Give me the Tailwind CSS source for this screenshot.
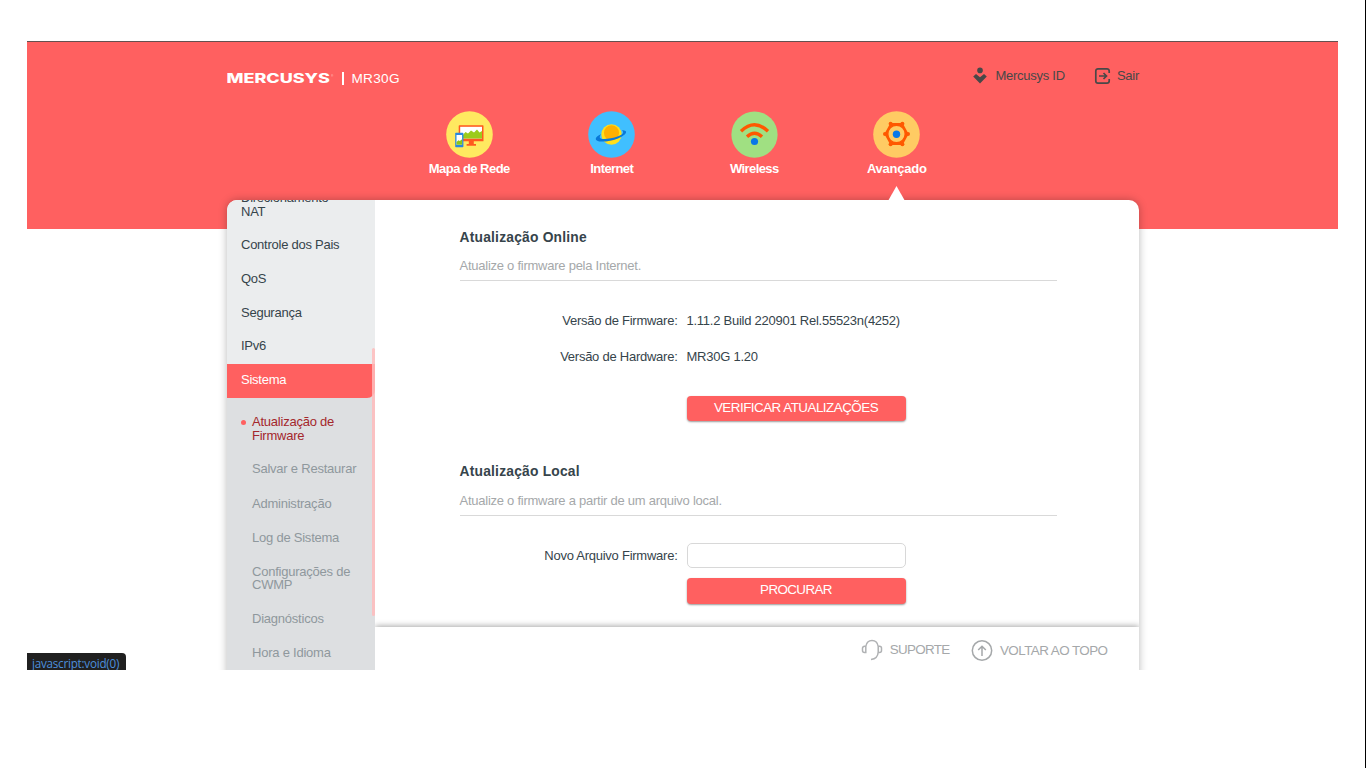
<!DOCTYPE html>
<html lang="pt-BR">
<head>
<meta charset="utf-8">
<title>MR30G</title>
<script src="https://cdn.jsdelivr.net/npm/@tailwindcss/browser@4"></script>
</head>
<body class="h-[768px] w-[1366px] overflow-hidden border-r border-black bg-white pt-[41px] pl-[27px] font-['Liberation_Sans',Arial,sans-serif] text-[13px] leading-[13.7px] tracking-[-0.25px] text-[#36444b]">
<div class="relative h-[629px] w-[1311px] overflow-hidden">
  <header class="h-[188px] border-t border-[#65504f] bg-[#ff6060] px-[200px]">
    <div class="flex h-[69px] w-[912px] items-start justify-between">
      <div class="flex items-center pt-[28px] text-white">
        <svg class="h-[16px] w-[108px] tracking-normal" viewBox="0 0 108 16"><text x="-0.5" y="13" font-family="Inter" font-weight="800" font-size="12.8" textLength="103.5" lengthAdjust="spacingAndGlyphs" fill="#fff">MERCUSYS</text><text x="104" y="7" font-size="3" fill="#fff" opacity=".7">®</text></svg>
        <span class="ml-[7px] h-[13px] w-[1.5px] bg-white"></span>
        <span class="ml-[8px] pt-[2px] text-[13.6px] tracking-[0.300px]">MR30G</span>
      </div>
      <div class="flex items-center pt-[25px] text-[#484848]">
        <svg class="h-[18px] w-[16px]" viewBox="0 0 16 18" fill="#484848"><circle cx="8" cy="3.4" r="2.8"/><path d="M1.2 9.6 4 7 8 10.3 12 7l2.800 2.600L8 16.400z"/></svg>
        <span class="-mt-px ml-[7px]">Mercusys ID</span>
        <svg class="ml-[29px] h-[18px] w-[17px]" viewBox="0 0 17 18" fill="none" stroke="#484848" stroke-width="1.700"><path d="M15.200 6V4a2.200 2.200 0 0 0-2.200-2.200H4A2.200 2.200 0 0 0 1.800 4v10A2.200 2.200 0 0 0 4 16.200h9a2.200 2.200 0 0 0 2.200-2.200v-2M5 9h7.600M9.500 6 12.500 9l-3 3"/></svg>
        <span class="-mt-px ml-[6px]">Sair</span>
      </div>
    </div>
    <nav class="ml-[171px] flex w-[570px] text-center font-bold text-white">
      <a class="flex w-[142.5px] flex-col items-center"><svg class="h-[47px] w-[47px]" viewBox="0 0 47 47"><circle cx="23.500" cy="23.500" r="23.300" fill="#ffe960"/><path d="M22.800 29.500h5v3.500h2.200v1.700H20.600V33h2.200z" fill="#ff5a1f"/><rect x="12.700" y="14.300" width="24.800" height="16" rx=".6" fill="#ff5a1f"/><path d="M14.200 15.800h21.800v11.700H14.200z" fill="#fff"/><path d="M16 25l3.500-4 2.500 1.500 3-3 3 2 3-3 2.500 3 2.500-1.500v7.500H16z" fill="#9ccb1b"/><rect x="9.200" y="21.800" width="8.200" height="14.500" rx=".8" fill="#2988df"/><path d="M10.500 24h5.600v9.800h-5.600z" fill="#fff"/><path d="M10.500 31l2-1.800 1.300.8 2.300-1.800v5.600h-5.600z" fill="#8bc41a"/></svg><span class="mt-[4px] tracking-[-0.530px]">Mapa de Rede</span></a>
      <a class="flex w-[142.5px] flex-col items-center"><svg class="h-[47px] w-[47px]" viewBox="0 0 47 47"><circle cx="23.500" cy="23.500" r="23.300" fill="#40bfff"/><circle cx="23.500" cy="23.500" r="10.200" fill="#ffdf1c"/><circle cx="23.500" cy="21.800" r="7.600" fill="#ffb000"/><path d="M13.500 23C5.500 26 6 30.700 14 30.600c5-.1 11-1.200 16-3.200 8-3.300 11.500-8.100 3.800-8.200 2.700 1.800 1.500 4.200-3.600 6.100-4.700 1.800-10.200 2.800-14.200 2.800-4.600 0-5.500-2.100-2.500-5.100z" fill="#0878d8"/></svg><span class="mt-[4px] tracking-[-0.580px]">Internet</span></a>
      <a class="flex w-[142.5px] flex-col items-center"><svg class="h-[47px] w-[47px]" viewBox="0 0 47 47"><circle cx="23.500" cy="23.700" r="23.100" fill="#a0e082"/><path d="M10 20.200Q23.500 7.200 37 20.200M16 25.700Q23.500 18.700 31 25.700" fill="none" stroke="#ff5900" stroke-width="3.300"/><circle cx="23.500" cy="30.500" r="3.600" fill="#0878e8"/></svg><span class="mt-[4px] tracking-[-0.600px]">Wireless</span></a>
      <a class="flex w-[142.5px] flex-col items-center"><svg class="h-[47px] w-[47px]" viewBox="0 0 47 47"><circle cx="23.500" cy="23.500" r="23.300" fill="#ffcb63"/><path d="M34 23 28.800 32.500h-10.600L13 23l5.200-9.500h10.600z" fill="none" stroke="#ff5900" stroke-width="2.800" stroke-linejoin="round"/><g fill="#ff5900"><circle cx="35" cy="23" r="2"/><circle cx="12" cy="23" r="2"/><circle cx="29.400" cy="12.800" r="2"/><circle cx="17.600" cy="12.800" r="2"/><circle cx="29.400" cy="33.200" r="2"/><circle cx="17.600" cy="33.200" r="2"/></g><circle cx="23.500" cy="23" r="8.800" fill="#ffcb63" stroke="#ff5900" stroke-width="1.600"/><circle cx="23.500" cy="23.300" r="3.700" fill="#0878e8"/></svg><span class="mt-[4px] tracking-[-0.250px]">Avançado</span></a>
    </nav>
  </header>

  <svg class="absolute top-[145px] left-[861px] z-10 h-[15px] w-[17px]" viewBox="0 0 17 15"><path d="M8.500 0 17 15H0z" fill="#fff"/></svg>

  <div class="absolute top-[159px] left-[200px] h-[530px] w-[912px] rounded-[10px] bg-white shadow-[0_0_8px_rgba(0,0,0,0.28)]">
    <div class="relative flex h-full overflow-hidden rounded-[10px]">
      <aside class="w-[148px] shrink-0 bg-[#ebedee]">
        <ul class="-mt-[18.200px]">
          <li class="px-[14px] pt-[9.200px] pb-[10.800px]">Direcionamento<br>NAT</li>
          <li class="px-[14px] pt-[9.200px] pb-[10.800px]">Controle dos Pais</li>
          <li class="px-[14px] pt-[9.200px] pb-[10.800px]">QoS</li>
          <li class="px-[14px] pt-[9.200px] pb-[10.800px]">Segurança</li>
          <li class="px-[14px] pt-[9.200px] pb-[10.800px]">IPv6</li>
          <li class="bg-[#dddfe1]"><div class="rounded-br-[8px] bg-[#ff6060] px-[14px] pt-[9.200px] pb-[10.800px] text-white">Sistema</div></li>
        </ul>
        <ul class="h-[300px] bg-[#dddfe1] pt-[7.500px] pl-[25px] tracking-[-0.230px] text-[#8f989d]">
          <li class="relative pt-[9.700px] pb-[10.700px] text-[#a4272c]"><span class="absolute top-[14.500px] -left-[11px] h-[5px] w-[5px] rounded-full bg-[#ff6060]"></span>Atualização de<br>Firmware</li>
          <li class="pt-[9.400px] pb-[11px]">Salvar e Restaurar</li>
          <li class="pt-[9.700px] pb-[10.700px]">Administração</li>
          <li class="pt-[9.700px] pb-[10.700px]">Log de Sistema</li>
          <li class="pt-[9.400px] pb-[11px]">Configurações de<br>CWMP</li>
          <li class="pt-[9.400px] pb-[11px]">Diagnósticos</li>
          <li class="pt-[9.400px] pb-[11px]">Hora e Idioma</li>
        </ul>
      </aside>
      <div class="absolute top-[148px] left-[145px] h-[268px] w-[3px] rounded-full bg-[#ffbcbc]/85"></div>

      <main class="flex flex-1 flex-col overflow-hidden">
        <div class="h-[427px] shrink-0 pt-[31px] pl-[84.500px]">
          <section class="w-[597px]">
            <h2 class="text-[13.800px] font-bold tracking-[0.220px]">Atualização Online</h2>
            <p class="mt-[14px] border-b border-[#d9d9d9] pb-[8px] text-[#a5a8aa]">Atualize o firmware pela Internet.</p>
            <div class="mt-[33px] grid grid-cols-[218px_219px] gap-x-[9px] gap-y-[21.500px]">
              <span class="text-right">Versão de Firmware:</span><span>1.11.2 Build 220901 Rel.55523n(4252)</span>
              <span class="text-right">Versão de Hardware:</span><span>MR30G 1.20</span>
            </div>
            <button class="mt-[32.500px] ml-[227px] block h-[25px] w-[219px] rounded-[4px] bg-[#ff6060] pb-[1px] text-[13.400px] tracking-[-0.510px] text-white shadow-[0_1px_2px_rgba(0,0,0,0.4)]">VERIFICAR ATUALIZAÇÕES</button>
          </section>
          <section class="mt-[44px] w-[597px]">
            <h2 class="text-[13.800px] font-bold tracking-[0.220px]">Atualização Local</h2>
            <p class="mt-[15px] border-b border-[#d9d9d9] pb-[8px] text-[#a5a8aa]">Atualize o firmware a partir de um arquivo local.</p>
            <div class="mt-[27px] grid grid-cols-[218px_219px] items-center gap-x-[9px]">
              <span class="text-right">Novo Arquivo Firmware:</span><input class="h-[25px] rounded-[5px] border border-[#d8d8d8] bg-white px-2">
            </div>
            <button class="mt-[10px] ml-[227px] block h-[26px] w-[219px] rounded-[4px] bg-[#ff6060] pb-[2px] text-[13.400px] tracking-[-0.600px] text-white shadow-[0_1px_2px_rgba(0,0,0,0.4)]">PROCURAR</button>
          </section>
        </div>
        <footer class="flex h-[103px] shrink-0 items-start justify-end bg-white pt-[12px] pr-[31.500px] text-[13.400px] text-[#a5a8aa] shadow-[0_-1px_6px_rgba(0,0,0,0.35)]">
          <svg class="h-[22px] w-[22px]" viewBox="0 0 22 22" fill="none" stroke="#b0b2b4" stroke-width="1.500"><path d="M4.800 7.500C5.500 3.300 7.800 1.500 11 1.500s5.600 2 6.200 6v5.500c-.2 4-2.600 7-7.200 7.500M4.800 7.300v6.200H3.500a2 2 0 0 1-2-2V9.300a2 2 0 0 1 2-2zM17.300 7.300h1.200a2 2 0 0 1 2 2v2.200a2 2 0 0 1-2 2h-1.200z"/></svg>
          <span class="mt-[4px] ml-[7px] tracking-[-0.680px]">SUPORTE</span>
          <svg class="ml-[21.500px] h-[22px] w-[22px]" viewBox="0 0 22 22" fill="none" stroke="#a5a8aa" stroke-width="1.500"><circle cx="11" cy="11.500" r="9.700"/><path d="M11 17V7.200M7.200 11 11 7.200l3.800 3.800"/></svg>
          <span class="mt-[5px] ml-[7px] tracking-[-0.540px]">VOLTAR AO TOPO</span>
        </footer>
      </main>
    </div>
  </div>

  <div class="absolute bottom-0 left-0 z-20 h-[17px] w-[99px] overflow-hidden rounded-tr-[4px] bg-[#202020] pt-[4px] pl-[5px] font-['Open_Sans',sans-serif] text-[11.700px] tracking-[-0.250px] whitespace-nowrap text-[#4c8fdd]">javascript:void(0)</div>
</div>
</body>
</html>
